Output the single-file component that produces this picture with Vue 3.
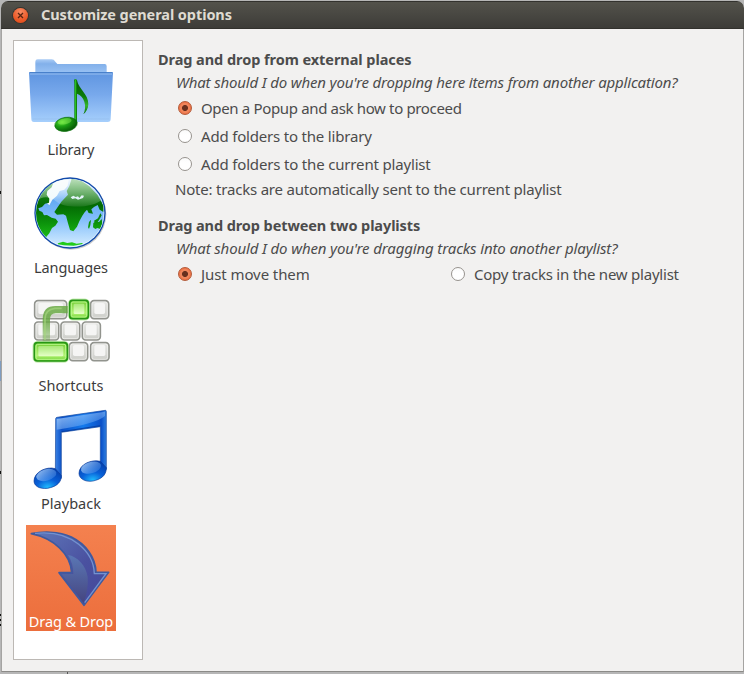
<script setup>
import { ref } from 'vue'

const sections = [
  { id: 'library', label: 'Library', top: 9 },
  { id: 'languages', label: 'Languages', top: 3 },
  { id: 'shortcuts', label: 'Shortcuts', top: -3 },
  { id: 'playback', label: 'Playback', top: 6 },
  { id: 'dragdrop', label: 'Drag & Drop', top: 15 },
]
const active = ref('dragdrop')

const external = ref('popup')
const externalOptions = [
  { id: 'popup', label: 'Open a Popup and ask how to proceed' },
  { id: 'library', label: 'Add folders to the library' },
  { id: 'playlist', label: 'Add folders to the current playlist' },
]

const between = ref('move')
const betweenOptions = [
  { id: 'move', label: 'Just move them' },
  { id: 'copy', label: 'Copy tracks in the new playlist' },
]

const keys = [
  { x: 44, y: 32, w: 96 }, { x: 212, y: 32, w: 54 },
  { x: 44, y: 96, w: 72 }, { x: 123, y: 96, w: 56 }, { x: 187, y: 96, w: 54 },
  { x: 148, y: 158, w: 55 }, { x: 212, y: 158, w: 55 },
]
const greenKeys = [{ x: 149, y: 31, w: 56 }, { x: 43, y: 158, w: 99 }]
</script>

<template>
  <div class="desktop">
    <div class="window">
      <header class="titlebar">
        <button class="close" aria-label="Close">
          <svg viewBox="0 0 15 15"><path d="M5 5l5 5M10 5l-5 5" /></svg>
        </button>
        <h1 class="title"><span>Customize general options</span></h1>
      </header>

      <div class="body">
        <nav class="sidebar">
          <a
            v-for="s in sections"
            :key="s.id"
            class="item"
            :class="{ active: active === s.id }"
            @click="active = s.id"
          >
            <svg class="icon" :viewBox="`18 ${s.top} 270 252`">
              <g v-if="s.id === 'library'">
                <defs>
                  <linearGradient id="fBack" x1="0" y1="0" x2="0" y2="1">
                    <stop offset="0" stop-color="#a9cbf5" /><stop offset=".3" stop-color="#82b0ea" /><stop offset="1" stop-color="#9cc4f5" />
                  </linearGradient>
                  <linearGradient id="fFront" x1="0" y1="0" x2="0" y2="1">
                    <stop offset="0" stop-color="#5f95e0" /><stop offset=".45" stop-color="#78a9ec" /><stop offset="1" stop-color="#a6cffc" />
                  </linearGradient>
                  <linearGradient id="stem" x1="0" y1="0" x2="1" y2="0">
                    <stop offset="0" stop-color="#087b08" /><stop offset=".5" stop-color="#2dcb20" /><stop offset="1" stop-color="#045804" />
                  </linearGradient>
                  <radialGradient id="gNote" cx=".35" cy=".3" r=".8">
                    <stop offset="0" stop-color="#5fe634" /><stop offset=".4" stop-color="#1b9d13" /><stop offset="1" stop-color="#034b03" />
                  </radialGradient>
                  <linearGradient id="flag" x1="0" y1="0" x2="0" y2="1">
                    <stop offset="0" stop-color="#045d04" /><stop offset=".5" stop-color="#0b7d0a" /><stop offset=".75" stop-color="#35b52a" /><stop offset="1" stop-color="#0a6d09" />
                  </linearGradient>
                </defs>
                <path d="M46 70V35q0-7 7-7h42q7 0 11 7l6 7h142q6 0 6 7v24z" fill="url(#fBack)" />
                <path d="M27 67H279L272 207q0 9-9 9H42q-8 0-8-9z" fill="url(#fFront)" />
                <path d="M29 68H277" stroke="#427bc7" stroke-width="3" />
                <path d="M30 72H276" stroke="#b7d7fa" stroke-width="2" />
                <path d="M38 207H268" stroke="#8bb5e5" stroke-width="2" opacity=".6" />
                <path d="M163 89q4-4 8 2c5 27 34 41 34 71 0 14-7 24-15 31 6-13 7-25 3-38-4-12-11-20-22-24z" fill="url(#flag)" />
                <path d="M163 89q4-3 8 2V223l-8-7z" fill="url(#stem)" />
                <ellipse cx="138" cy="223" rx="34" ry="21" transform="rotate(-9 138 223)" fill="url(#gNote)" stroke="#087208" stroke-width="2" />
                <ellipse cx="134" cy="214" rx="21" ry="9" transform="rotate(-12 134 214)" fill="#91ef5c" opacity=".45" />
              </g>

              <g v-else-if="s.id === 'languages'">
                <defs>
                  <linearGradient id="sea" x1="0" y1="0" x2="0" y2="1">
                    <stop offset="0" stop-color="#c8e6ff" /><stop offset=".3" stop-color="#62a9f4" /><stop offset=".6" stop-color="#84bffb" /><stop offset="1" stop-color="#d5edff" />
                  </linearGradient>
                  <linearGradient id="land" gradientUnits="userSpaceOnUse" x1="0" y1="28" x2="0" y2="225">
                    <stop offset="0" stop-color="#1f951e" /><stop offset=".4" stop-color="#036a03" /><stop offset=".65" stop-color="#0b900b" /><stop offset="1" stop-color="#22cf1a" />
                  </linearGradient>
                  <linearGradient id="shine" x1="0" y1="0" x2="0" y2="1">
                    <stop offset="0" stop-color="#fff" stop-opacity=".7" /><stop offset="1" stop-color="#fff" stop-opacity=".1" />
                  </linearGradient>
                  <clipPath id="globe"><circle cx="150" cy="129" r="102" /></clipPath>
                </defs>
                <circle cx="153" cy="133" r="106" fill="#000" opacity=".2" />
                <circle cx="150" cy="129" r="107" fill="#114aab" />
                <circle cx="150" cy="129" r="103" fill="#eaf6ff" />
                <circle cx="150" cy="129" r="101" fill="url(#sea)" />
                <g clip-path="url(#globe)">
                  <path d="M96 36q26-15 50-6l-3 17-10 12-14 4-8 14-14 12-9 17-10-10-12-13 8-16 12-11z" fill="#eef8fb" />
                  <g fill="url(#land)">
                    <path d="M43 116l20-44 24-27 14-10-6 17-13 11-2 11 8 12-1 12-12 3-9 10-11 4 3 7 9 4 5 10 9-1 14 8 12 3 7 9-8 12-10 7-8 16-9 10 3 11-5 6-12-20-9-16-3-18-9-16z" />
                    <path d="M124 95l20-21-4-11 8-15 7-22 31 8 22 15 24 25 20 35-2 17-11-7-6-14-11 6-8 7 5 13-13-2-5-10-7 8-7 10-9 17-7 16-11 14-10-4-6-20-6-23-8-4-19 1-8-8z" />
                    <path d="M204 172l3-16 6-7-2 17-4 11zM221 153l13-8 7-15 4 6-8 15-8 9zM220 159l7-5 10 2 8-9 2 12-6 18-9-3-6 3-7-5z" />
                    <path d="M114 220l15-5 13 4 14-2 14 4 16-2 3 3-28 5-28-1-20-3z" />
                  </g>
                  <path d="M152 82l8-5 7 4 7-2 4 5 7-8 7 1-3 7-15 5-8-4-9 2z" fill="#d6edf4" />
                  <path d="M47 96C60 50 98 26 150 26c46 0 86 24 99 60-29 30-114 30-139 9-20-16-43-20-63 1z" fill="url(#shine)" />
                </g>
              </g>

              <g v-else-if="s.id === 'shortcuts'">
                <defs>
                  <linearGradient id="key" x1="0" y1="0" x2="0" y2="1">
                    <stop offset="0" stop-color="#e6e7e4" /><stop offset="1" stop-color="#cdcec9" />
                  </linearGradient>
                  <linearGradient id="gkey" x1="0" y1="0" x2="0" y2="1">
                    <stop offset="0" stop-color="#72cc35" /><stop offset=".7" stop-color="#b2f373" /><stop offset="1" stop-color="#68cc2c" />
                  </linearGradient>
                  <linearGradient id="cap" x1="0" y1="0" x2="0" y2="1">
                    <stop offset="0" stop-color="#a8e878" /><stop offset="1" stop-color="#e6ffc8" />
                  </linearGradient>
                  <linearGradient id="bend" gradientUnits="userSpaceOnUse" x1="0" y1="154" x2="0" y2="90">
                    <stop offset="0" stop-color="#499718" stop-opacity=".3" /><stop offset="1" stop-color="#69a945" />
                  </linearGradient>
                </defs>
                <g v-for="k in keys" :key="`${k.x}-${k.y}`">
                  <rect :x="k.x" :y="k.y" :width="k.w" height="54" rx="10" fill="url(#key)" stroke="#92948e" stroke-width="5" />
                  <rect :x="k.x + 4" :y="k.y + 4" :width="k.w - 8" height="46" rx="6" fill="none" stroke="#f6f6f5" stroke-width="2" />
                  <rect :x="k.x + 11" :y="k.y + 7" :width="k.w - 22" height="33" rx="5" fill="#f5f5f4" />
                </g>
                <g v-for="k in greenKeys" :key="`${k.x}-${k.y}`">
                  <rect :x="k.x - 2" :y="k.y - 2" :width="k.w + 4" height="59" rx="12" fill="none" stroke="#9cde79" stroke-width="7" opacity=".55" />
                  <rect :x="k.x" :y="k.y" :width="k.w" height="55" rx="9" fill="url(#gkey)" stroke="#269615" stroke-width="5" />
                  <rect :x="k.x + 5" :y="k.y + 5" :width="k.w - 10" height="45" rx="5" fill="none" stroke="#b9f78b" stroke-width="3" />
                  <rect :x="k.x + 12" :y="k.y + 10" :width="k.w - 24" height="31" rx="4" fill="url(#cap)" />
                </g>
                <path d="M79 154V88q0-29 28-29h36" fill="none" stroke="url(#bend)" stroke-width="22" opacity=".85" />
                <path d="M75 150V86q0-27 30-31h20" fill="none" stroke="#a5d57f" stroke-width="5" opacity=".7" />
              </g>

              <g v-else-if="s.id === 'playback'">
                <defs>
                  <linearGradient id="blue" x1="0" y1="0" x2="1" y2="0">
                    <stop offset="0" stop-color="#3a82e4" /><stop offset=".13" stop-color="#0a50c8" /><stop offset=".55" stop-color="#147bed" /><stop offset=".9" stop-color="#0a50c8" /><stop offset="1" stop-color="#2f7fe0" />
                  </linearGradient>
                  <radialGradient id="head" cx=".5" cy=".95" r=".9">
                    <stop offset="0" stop-color="#20bdff" /><stop offset=".45" stop-color="#0860d8" /><stop offset="1" stop-color="#0440ad" />
                  </radialGradient>
                  <linearGradient id="gloss" x1="0" y1="0" x2="1" y2="1">
                    <stop offset="0" stop-color="#b7daff" stop-opacity=".85" /><stop offset="1" stop-color="#4f94ed" stop-opacity=".3" />
                  </linearGradient>
                </defs>
                <path d="M107 41q0-3 4-4l145-21q3 0 3 4v173l-18 3V65L124 82v138l-18-8z" fill="url(#blue)" stroke="#17479c" stroke-width="2" />
                <path d="M110 42L255 20v13q-30 25-145 41z" fill="url(#gloss)" />
                <path d="M125 80L241 62" stroke="#0841a3" stroke-width="3" />
                <g fill="url(#head)" stroke="#0b3a97" stroke-width="2">
                  <path d="M106 191c-26-8-64 10-64 37 0 19 26 27 49 20 22-6 33-18 33-36z" />
                  <path d="M241 169c-26-7-64 9-64 36 0 20 27 29 50 21 23-7 32-20 32-38z" />
                </g>
                <ellipse cx="79" cy="210" rx="31" ry="17" transform="rotate(-16 79 210)" fill="url(#gloss)" />
                <ellipse cx="213" cy="188" rx="31" ry="17" transform="rotate(-16 213 188)" fill="url(#gloss)" />
              </g>

              <g v-else>
                <defs>
                  <linearGradient id="arr" x1="0" y1="0" x2="1" y2="1">
                    <stop offset="0" stop-color="#5f78ba" /><stop offset=".55" stop-color="#4a51a0" /><stop offset="1" stop-color="#44479a" />
                  </linearGradient>
                  <linearGradient id="arrLow" x1="0" y1="0" x2="0" y2="1">
                    <stop offset="0" stop-color="#5a77b5" /><stop offset="1" stop-color="#454580" />
                  </linearGradient>
                </defs>
                <path d="M34 41C63 35 116 32 154 51c43 21 73 61 74 106h38L192 256 117 158h38C152 101 101 55 34 41z" fill="url(#arr)" stroke="#3f5a9f" stroke-width="5" stroke-linejoin="round" />
                <path d="M144 105c28 4 54 32 59 65 2 24-2 51-12 79L125 162h35c0-22-5-39-16-57z" fill="url(#arrLow)" />
                <path d="M45 40C99 34 142 45 176 73c31 25 46 54 47 88h35L194 248" fill="none" stroke="#7392d0" stroke-width="4" />
              </g>
            </svg>
            <span class="label" :class="`l-${s.id}`">{{ s.label }}</span>
          </a>
        </nav>

        <main class="content">
          <section class="group">
            <h2 class="h-ext">Drag and drop from external places</h2>
            <p class="question q-ext">What should I do when you're dropping here items from another application?</p>
            <div class="options">
              <label v-for="o in externalOptions" :key="o.id" class="option" @click="external = o.id">
                <i class="radio" :class="{ on: external === o.id }"></i>
                <span :class="`e-${o.id}`">{{ o.label }}</span>
              </label>
            </div>
            <p class="note">Note: tracks are automatically sent to the current playlist</p>
          </section>
          <section class="group">
            <h2 class="h-btw">Drag and drop between two playlists</h2>
            <p class="question q-btw">What should I do when you're dragging tracks into another playlist?</p>
            <div class="options row">
              <label v-for="o in betweenOptions" :key="o.id" class="option" @click="between = o.id">
                <i class="radio" :class="{ on: between === o.id }"></i>
                <span :class="`b-${o.id}`">{{ o.label }}</span>
              </label>
            </div>
          </section>
        </main>
      </div>
    </div>
  </div>
</template>

<style>
body { margin: 0; }
</style>

<style scoped>
* { box-sizing: border-box; }
.desktop {
  width: 744px; height: 674px; padding: 1px 0 2px 1px; overflow: hidden;
  /* slivers of whatever lies behind the window, along its left and bottom edges */
  background:
    linear-gradient(#111, #111) 0 191px / 1px 3px no-repeat,
    linear-gradient(#111, #111) 0 471px / 1px 3px no-repeat,
    linear-gradient(#111, #111) 0 614px / 1px 2px no-repeat,
    linear-gradient(#111, #111) 0 619px / 1px 2px no-repeat,
    linear-gradient(#111, #111) 0 624px / 1px 2px no-repeat,
    linear-gradient(#7f9cc0, #7f9cc0) 0 361px / 1px 20px no-repeat,
    linear-gradient(#555, #555) 67px 672px / 1px 2px no-repeat,
    #b6b6b6;
  font-family: "Noto Sans", "Open Sans", sans-serif; font-size: 15px; color: #4c4c4c;
  white-space: nowrap;
}
.window {
  display: flex; flex-direction: column; height: 671px;
  border-radius: 7px 7px 0 0; background: #f2f1f0; overflow: hidden;
}
.titlebar {
  display: flex; align-items: center; flex: none; height: 28px; padding: 0 12px; gap: 13px;
  background: linear-gradient(#53524b, #3d3c38);
  border-top: 1px solid #33322e; border-bottom: 1px solid #32312d;
}
.close {
  width: 15px; height: 15px; padding: 0; border: 0; border-radius: 50%;
  background: radial-gradient(circle at 50% 25%, #f78b63, #eb5a28 60%, #dc4717);
  box-shadow: 0 0 0 1px #37352f;
}
.close svg { display: block; width: 15px; height: 15px; }
.close path { stroke: #592411; stroke-width: 1.3; fill: none; }
.title { margin: 0; font-size: 14.5px; line-height: 20px; color: #dfdbd2; font-weight: 700; letter-spacing: -.08px; position: relative; top: -1px; }
.body {
  display: flex; flex: 1; padding: 11px; gap: 15px;
  border: 1px solid #a5a4a2; border-top: 0; border-bottom-color: #8c8b88;
}
.sidebar {
  display: flex; flex-direction: column; gap: 12px;
  width: 130px; height: 620px; padding: 12px;
  border: 1px solid #bcb8b4; background: #fff;
}
.item { display: flex; flex-direction: column; align-items: center; flex: none; width: 90px; height: 106px; cursor: default; }
.icon { display: block; flex: none; width: 90px; height: 84px; }
.label { line-height: 24px; height: 22px; font-size: 14.5px; color: #3c3c3c; letter-spacing: -.1px; }
.l-shortcuts, .l-playback { letter-spacing: 0; }
.active { background: linear-gradient(#f4814f, #ec6e3c); }
.active .label { color: #fff; }
.content { flex: 1; padding-top: 8px; }
.group { height: 166px; }
h2, p { margin: 0; line-height: 23px; height: 23px; }
h2 { font-size: 14.5px; font-weight: 700; }
.h-ext { letter-spacing: -.06px; }
.h-btw { letter-spacing: -.09px; }
.question { padding-left: 18px; font-style: italic; }
.q-ext { letter-spacing: -.16px; }
.q-btw { letter-spacing: -.135px; }
.options { display: flex; flex-direction: column; padding-left: 20px; }
.option { display: flex; align-items: center; width: 273px; height: 28px; gap: 9px; }
.e-popup { letter-spacing: -.345px; }
.e-library { letter-spacing: -.19px; }
.e-playlist { letter-spacing: -.17px; }
.b-move { letter-spacing: -.08px; }
.b-copy { letter-spacing: -.225px; }
.note { padding-left: 17px; letter-spacing: -.205px; }
.radio {
  width: 14px; height: 14px; border-radius: 50%; flex: none;
  border: 1px solid #97938e; background: linear-gradient(#fafafa, #fff 40%);
}
.radio.on {
  border-color: #b35a39;
  background: radial-gradient(circle, #69301e 0 2.6px, #f0855b 3.4px 4.5px, #ee7448 5.5px);
}
.row { flex-direction: row; }
</style>
